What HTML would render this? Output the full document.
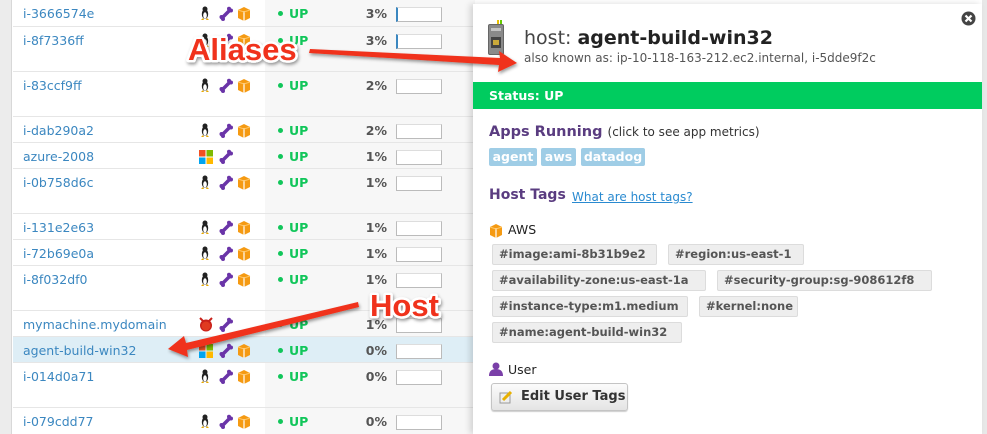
<!DOCTYPE html>
<html><head><meta charset="utf-8"><style>
*{margin:0;padding:0;box-sizing:border-box}
body{width:987px;height:434px;overflow:hidden;background:#fff;font-family:"DejaVu Sans","Liberation Sans",sans-serif;position:relative}
.lg{position:absolute;left:0;top:0;width:12px;height:434px;background:#ececec;border-right:1px solid #d8d8d8}
.col{position:absolute;left:265px;top:0;width:210px;height:434px;background:#f7f7f7}
.row{position:absolute;left:13px;width:462px;border-bottom:1px solid #e6e6e6}
.row.hl{background:#deeef6}
.nm{position:absolute;left:10px;top:5px;font-size:12.5px;color:#3b87c0;line-height:18px}
.ic{position:absolute;top:6px;height:15px}
.up{position:absolute;left:265px;top:5px;font-size:12.5px;color:#11c65a;font-weight:bold;line-height:18px}
.up:before{content:"";display:inline-block;width:5px;height:5px;border-radius:50%;background:#11c65a;margin-right:6px;vertical-align:2px}
.pc{position:absolute;left:330px;width:44px;text-align:right;top:5px;font-size:12.5px;color:#555;font-weight:bold;line-height:18px}
.bar{position:absolute;left:383px;top:7px;width:46px;height:15px;border:1px solid #bbb;border-top-color:#ddd;background:#fff}
.panel{position:absolute;left:473px;top:4px;width:509px;height:430px;background:#fff;box-shadow:-3px 0 6px rgba(0,0,0,.15)}
.rg{position:absolute;left:982px;top:0;width:5px;height:434px;background:#e8e8e8}
.t{position:absolute;white-space:nowrap}
.app{position:absolute;top:148px;height:18px;background:#9fcde6;color:#fff;font-weight:bold;font-size:12.5px;line-height:18px;border-radius:2px;text-align:center}
.tag{position:absolute;height:21px;background:#eeeeee;border:1px solid #dcdcdc;border-radius:2px;color:#555;font-weight:bold;font-size:11.5px;line-height:19px;padding-left:6px;white-space:nowrap;overflow:hidden}
</style></head><body>
<div class="lg"></div>
<div class="col"></div>

<svg width="0" height="0" style="position:absolute"><defs>
<g id="tux"><ellipse cx="5" cy="8" rx="3.2" ry="5" fill="#222"/><ellipse cx="5" cy="9.5" rx="1.8" ry="3.2" fill="#fff"/><circle cx="5" cy="3" r="2.5" fill="#222"/><path d="M1 14h3l-1-2zM6 14h3l-2-2z" fill="#e8a800"/></g>
<g id="bone"><path d="M3 12 L11 4" stroke="#6a34a8" stroke-width="3.5" stroke-linecap="round"/><circle cx="2.5" cy="11" r="2" fill="#6a34a8"/><circle cx="4" cy="13" r="2" fill="#6a34a8"/><circle cx="10" cy="2.8" r="2" fill="#6a34a8"/><circle cx="12" cy="4.5" r="2" fill="#6a34a8"/></g>
<g id="box"><path d="M1 4 L7 1 L13 4 L13 12 L7 15 L1 12Z" fill="#f59a12"/><path d="M7 5 V15" stroke="#fff" stroke-width="1.2"/><path d="M1 4 L7 6 L13 4" stroke="#ffc766" stroke-width="1" fill="none"/></g>
<g id="win"><rect x="0" y="1" width="6.5" height="6.5" fill="#f25022"/><rect x="7.5" y="1" width="6.5" height="6.5" fill="#7fba00"/><rect x="0" y="8.5" width="6.5" height="6.5" fill="#00a4ef"/><rect x="7.5" y="8.5" width="6.5" height="6.5" fill="#ffb900"/></g>
<g id="bsd"><circle cx="7" cy="8.5" r="6" fill="#c8201a"/><circle cx="7" cy="9" r="4.5" fill="#e03a20"/><path d="M1 1 L4 4 M13 1 L10 4" stroke="#c8201a" stroke-width="2"/></g>
</defs></svg>

<div class="row" style="top:0;height:27px"><span class="nm">i-3666574e</span><svg class="ic" style="left:187px" width="60" height="16"><use href="#tux"/><use href="#bone" x="19"/><use href="#box" x="37"/></svg><span class="up">UP</span><span class="pc">3%</span><div class="bar" style="border-left:2px solid #3b87c0"></div></div>
<div class="row" style="top:27px;height:45px"><span class="nm">i-8f7336ff</span><svg class="ic" style="left:187px" width="60" height="16"><use href="#tux"/><use href="#bone" x="19"/><use href="#box" x="37"/></svg><span class="up">UP</span><span class="pc">3%</span><div class="bar" style="border-left:2px solid #3b87c0"></div></div>
<div class="row" style="top:72px;height:45px"><span class="nm">i-83ccf9ff</span><svg class="ic" style="left:187px" width="60" height="16"><use href="#tux"/><use href="#bone" x="19"/><use href="#box" x="37"/></svg><span class="up">UP</span><span class="pc">2%</span><div class="bar"></div></div>
<div class="row" style="top:117px;height:26px"><span class="nm">i-dab290a2</span><svg class="ic" style="left:187px" width="60" height="16"><use href="#tux"/><use href="#bone" x="19"/><use href="#box" x="37"/></svg><span class="up">UP</span><span class="pc">2%</span><div class="bar"></div></div>
<div class="row" style="top:143px;height:26px"><span class="nm">azure-2008</span><svg class="ic" style="left:186px" width="60" height="16"><use href="#win"/><use href="#bone" x="20"/></svg><span class="up">UP</span><span class="pc">1%</span><div class="bar"></div></div>
<div class="row" style="top:169px;height:45px"><span class="nm">i-0b758d6c</span><svg class="ic" style="left:187px" width="60" height="16"><use href="#tux"/><use href="#bone" x="19"/><use href="#box" x="37"/></svg><span class="up">UP</span><span class="pc">1%</span><div class="bar"></div></div>
<div class="row" style="top:214px;height:26px"><span class="nm">i-131e2e63</span><svg class="ic" style="left:187px" width="60" height="16"><use href="#tux"/><use href="#bone" x="19"/><use href="#box" x="37"/></svg><span class="up">UP</span><span class="pc">1%</span><div class="bar"></div></div>
<div class="row" style="top:240px;height:26px"><span class="nm">i-72b69e0a</span><svg class="ic" style="left:187px" width="60" height="16"><use href="#tux"/><use href="#bone" x="19"/><use href="#box" x="37"/></svg><span class="up">UP</span><span class="pc">1%</span><div class="bar"></div></div>
<div class="row" style="top:266px;height:45px"><span class="nm">i-8f032df0</span><svg class="ic" style="left:187px" width="60" height="16"><use href="#tux"/><use href="#bone" x="19"/><use href="#box" x="37"/></svg><span class="up">UP</span><span class="pc">1%</span><div class="bar"></div></div>
<div class="row" style="top:311px;height:26px"><span class="nm">mymachine.mydomain</span><svg class="ic" style="left:186px" width="60" height="16"><use href="#bsd"/><use href="#bone" x="20"/></svg><span class="up">UP</span><span class="pc">1%</span><div class="bar"></div></div>
<div class="row hl" style="top:337px;height:26px"><span class="nm">agent-build-win32</span><svg class="ic" style="left:186px" width="60" height="16"><use href="#win"/><use href="#bone" x="20"/><use href="#box" x="38"/></svg><span class="up">UP</span><span class="pc">0%</span><div class="bar"></div></div>
<div class="row" style="top:363px;height:45px"><span class="nm">i-014d0a71</span><svg class="ic" style="left:187px" width="60" height="16"><use href="#tux"/><use href="#bone" x="19"/><use href="#box" x="37"/></svg><span class="up">UP</span><span class="pc">0%</span><div class="bar"></div></div>
<div class="row" style="top:408px;height:26px;border-bottom:none"><span class="nm">i-079cdd77</span><svg class="ic" style="left:187px" width="60" height="16"><use href="#tux"/><use href="#bone" x="19"/><use href="#box" x="37"/></svg><span class="up">UP</span><span class="pc">0%</span><div class="bar"></div></div>

<div class="rg"></div>
<div class="panel">
<div style="position:absolute;left:15px;top:20px;width:16px;height:31px;border-radius:2px;background:#8a8a8a;border:1px solid #666"></div>
<div style="position:absolute;left:18px;top:24px;width:10px;height:3px;background:#c4c4c4"></div>
<div style="position:absolute;left:18px;top:33px;width:10px;height:11px;background:#444"></div>
<div style="position:absolute;left:20px;top:36px;width:6px;height:5px;background:#c9a93a"></div>
<div style="position:absolute;left:24px;top:16px;width:2px;height:4px;background:#e8c000"></div>
<div style="position:absolute;left:27px;top:16px;width:2px;height:4px;background:#6c0"></div>
<svg style="position:absolute;left:488px;top:7px" width="15" height="15"><circle cx="7.5" cy="7.5" r="7" fill="#444"/><path d="M4.5 4.5L10.5 10.5M10.5 4.5L4.5 10.5" stroke="#fff" stroke-width="2.2"/></svg>
<div class="t" style="left:51px;top:23px;font-size:19px;color:#444">host: <b style="color:#222">agent-build-win32</b></div>
<div class="t" style="left:51px;top:47px;font-size:12px;color:#555">also known as: ip-10-118-163-212.ec2.internal, i-5dde9f2c</div>
<div style="position:absolute;left:0;top:78px;width:509px;height:27px;background:#00cc5f"></div>
<div class="t" style="left:16px;top:84px;font-size:12.5px;color:#fff;font-weight:bold">Status: UP</div>
<div class="t" style="left:16px;top:120px;font-size:14.5px;color:#5a3c80;font-weight:bold">Apps Running <span style="font-weight:normal;font-size:12px;color:#333">(click to see app metrics)</span></div>
<div class="app" style="left:16px;width:48px;top:144px">agent</div>
<div class="app" style="left:68px;width:35px;top:144px">aws</div>
<div class="app" style="left:108px;width:64px;top:144px">datadog</div>
<div class="t" style="left:16px;top:183px;font-size:14px;color:#5a3c80;font-weight:bold">Host Tags</div>
<div class="t" style="left:99px;top:186px;font-size:12px;color:#2a8ad0;text-decoration:underline">What are host tags?</div>
<svg style="position:absolute;left:16px;top:219px" width="14" height="15"><use href="#box"/></svg>
<div class="t" style="left:35px;top:218px;font-size:12.5px;color:#222">AWS</div>
<div class="tag" style="left:19px;top:240px;width:165px">#image:ami-8b31b9e2</div>
<div class="tag" style="left:195px;top:240px;width:136px">#region:us-east-1</div>
<div class="tag" style="left:19px;top:266px;width:214px">#availability-zone:us-east-1a</div>
<div class="tag" style="left:244px;top:266px;width:215px">#security-group:sg-908612f8</div>
<div class="tag" style="left:19px;top:292px;width:196px">#instance-type:m1.medium</div>
<div class="tag" style="left:226px;top:292px;width:99px">#kernel:none</div>
<div class="tag" style="left:19px;top:318px;width:190px">#name:agent-build-win32</div>
<svg style="position:absolute;left:16px;top:358px" width="14" height="14"><circle cx="7" cy="4" r="3.5" fill="#7a3fa8"/><path d="M0 14 Q0 7 7 7 Q14 7 14 14Z" fill="#7a3fa8"/></svg>
<div class="t" style="left:35px;top:358px;font-size:12.5px;color:#222">User</div>
<div style="position:absolute;left:18px;top:379px;width:137px;height:28px;border:1px solid #c4c4c4;border-radius:3px;background:linear-gradient(#fbfbfb,#e4e4e4);box-shadow:0 1px 1px rgba(0,0,0,.2)"></div>
<svg style="position:absolute;left:26px;top:386px" width="14" height="14"><rect x="1" y="3" width="10" height="10" fill="#eee" stroke="#999"/><path d="M4 10 L12 2" stroke="#e8b000" stroke-width="3"/></svg>
<div class="t" style="left:48px;top:385px;font-size:13px;color:#333;font-weight:bold">Edit User Tags</div>
</div>

<svg style="position:absolute;left:0;top:0" width="987" height="434">
<defs><filter id="sh"><feDropShadow dx="1" dy="2" stdDeviation="1.5" flood-opacity=".4"/></filter></defs>
<g filter="url(#sh)">
<path d="M310 49 L500 58 L499 51 L517 63 L498 72 L499 65 L309 53Z" fill="#f0301a"/>
<path d="M358 302 L186 343 L184 336 L168 349 L188 357 L187 350 L359 307Z" fill="#f0301a"/>
<text x="188" y="60" font-family="Liberation Sans,sans-serif" font-weight="bold" font-size="31" fill="#f0301a" stroke="#fff" stroke-width="5" paint-order="stroke" stroke-linejoin="round">Aliases</text>
<text x="370" y="316" font-family="Liberation Sans,sans-serif" font-weight="bold" font-size="31" fill="#f0301a" stroke="#fff" stroke-width="5" paint-order="stroke" stroke-linejoin="round">Host</text>
</g>
</svg>
</body></html>
